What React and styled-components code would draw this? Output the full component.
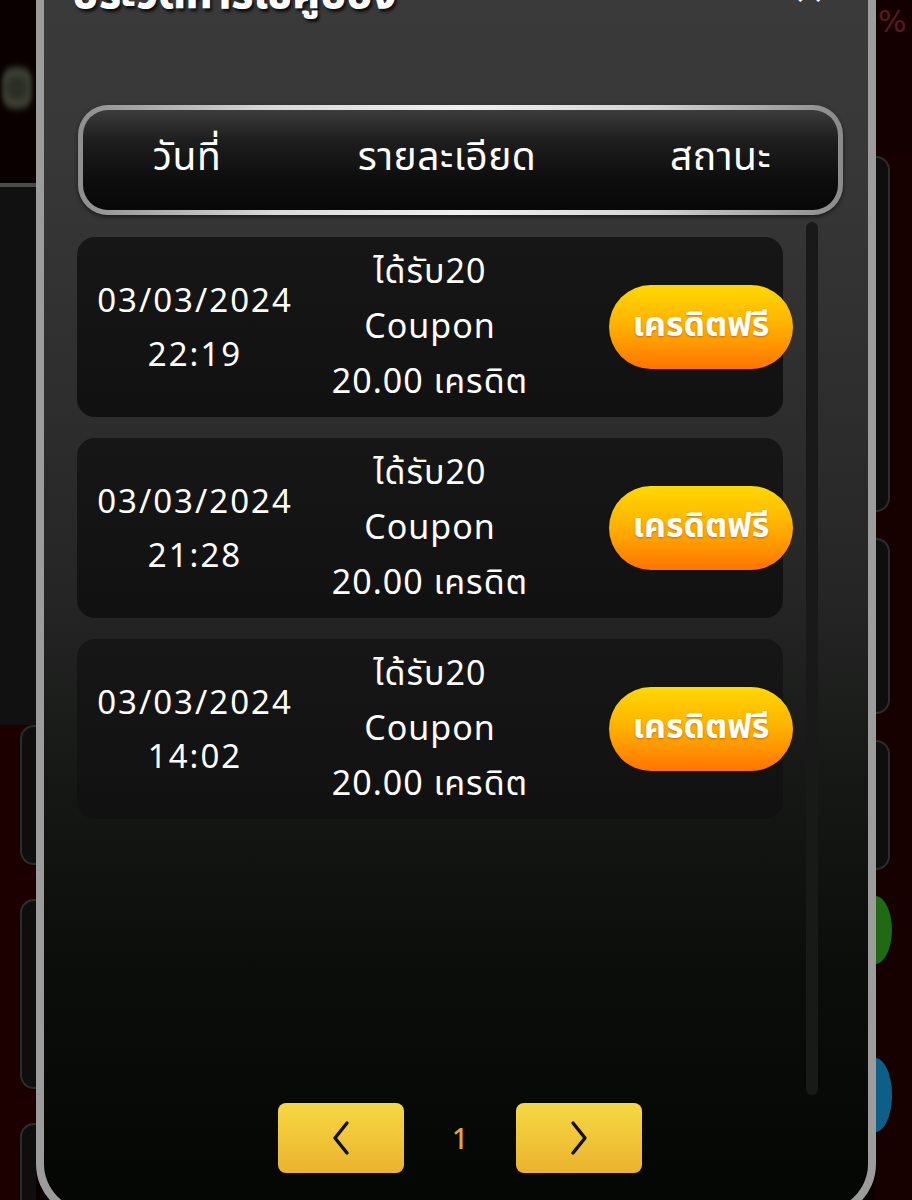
import React from "react";
import styled, { createGlobalStyle } from "styled-components";

const GlobalStyle = createGlobalStyle`
  html, body {
    margin: 0;
    padding: 0;
    background: #000;
  }
  body {
    font-family: "Noto Sans Thai", "Noto Sans", "DejaVu Sans", sans-serif;
    color: #fff;
  }
  * {
    box-sizing: border-box;
  }
`;

const Page = styled.div`
  display: grid;
  grid-template-columns: 36px 840px 36px;
  width: 912px;
  height: 1200px;
  overflow: hidden;
  background: #0b0000;
`;

/* ---------- dimmed page behind the modal ---------- */

const Side = styled.div`
  display: flex;
  flex-direction: column;
  overflow: hidden;
`;

const Block = styled.div`
  flex: ${(p) => (p.grow ? 1 : "none")};
  height: ${(p) => (p.h ? `${p.h}px` : "auto")};
  background: ${(p) => p.bg || "transparent"};
  border-top: ${(p) => (p.line ? "4px solid #4a4a4a" : "none")};
  display: flex;
  flex-direction: column;
  align-items: ${(p) => (p.right ? "flex-start" : "flex-end")};
  padding: ${(p) => p.pad || "0"};
  gap: ${(p) => (p.gap ? `${p.gap}px` : "0")};
`;

const Blob = styled.div`
  width: 30px;
  height: 60px;
  margin: 58px 4px 0 0;
  border-radius: 45%;
  background: radial-gradient(circle at 50% 50%, #2a2e26 20%, #3e4236 50%, rgba(40, 40, 30, 0) 75%);
  filter: blur(2px);
`;

const GhostCard = styled.div`
  width: ${(p) => p.w || 16}px;
  height: ${(p) => p.h}px;
  background: #0e0e0e;
  border: 2px solid #2c2c2c;
  border-radius: ${(p) => (p.right ? "0 14px 14px 0" : "14px 0 0 14px")};
  ${(p) => (p.right ? "border-left: none;" : "border-right: none;")}
`;

const Dot = styled.div`
  width: 34px;
  height: ${(p) => p.h || 68}px;
  margin-left: -18px;
  border-radius: 50%;
  background: ${(p) => p.color};
  display: flex;
  align-items: center;
  justify-content: flex-end;
  padding-right: 6px;
  font: 700 26px "DejaVu Sans", sans-serif;
  color: #111;
`;

const Percent = styled.span`
  font: 400 30px "DejaVu Sans", sans-serif;
  color: #5a1a20;
  margin: 4px 0 0 2px;
`;

/* ---------- modal ---------- */

const Modal = styled.div`
  margin-top: -64px;
  height: 1282px;
  border: 8px solid #9c9c9c;
  border-top: none;
  border-radius: 0 0 54px 54px;
  background: linear-gradient(
    180deg,
    #3b3b3b 0%,
    #383838 16%,
    #2e2e2e 36%,
    #242524 52%,
    #161816 66%,
    #0b0e0b 80%,
    #040604 100%
  );
  display: flex;
  flex-direction: column;
`;

const TitleRow = styled.div`
  height: 84px;
  display: flex;
  align-items: flex-end;
  justify-content: space-between;
  padding: 0 42px 0 28px;
`;

const Title = styled.h1`
  margin: 0;
  font-size: 42px;
  font-weight: 800;
  line-height: 1;
  color: #fff;
  text-shadow: 2px 3px 3px rgba(0, 0, 0, 0.75);
  transform: translateY(-4px);
`;

const Close = styled.span`
  font: 700 40px "DejaVu Sans", sans-serif;
  line-height: 1;
  color: #fff;
  transform: translateY(-9px);
`;

const Body = styled.div`
  flex: 1;
  display: flex;
  flex-direction: column;
  padding: 85px 25px 0 33px;
`;

const HeadBar = styled.div`
  height: 110px;
  margin-left: 1px;
  display: grid;
  grid-template-columns: 208px 312px 1fr;
  align-items: center;
  border: 5px solid transparent;
  border-radius: 30px;
  background:
    linear-gradient(180deg, #3c3c3c 0%, #1e1e1e 30%, #0d0d0d 70%, #080808 100%) padding-box,
    linear-gradient(90deg, #8e8e8e 0%, #d8d8d8 25%, #f0f0f0 50%, #d4d4d4 75%, #8a8a8a 100%) border-box;
  box-shadow: 0 2px 4px rgba(0, 0, 0, 0.5);
`;

const HeadCell = styled.div`
  text-align: center;
  font-size: 39px;
  font-weight: 400;
  letter-spacing: 0.5px;
  color: #fff;
  padding-bottom: 4px;
`;

const ListArea = styled.div`
  margin-top: 7px;
  height: 873px;
  display: flex;
`;

const List = styled.div`
  width: 706px;
  flex: none;
  padding-top: 15px;
  display: flex;
  flex-direction: column;
  gap: 21px;
`;

const Row = styled.div`
  height: 180px;
  border-radius: 18px;
  background: linear-gradient(180deg, #161616 0%, #111111 100%);
  display: flex;
  align-items: center;
  overflow: visible;
`;

const DateCol = styled.div`
  width: 236px;
  flex: none;
  display: flex;
  flex-direction: column;
  align-items: center;
  gap: 16px;
  font-family: "Noto Sans", sans-serif;
  font-size: 33px;
  letter-spacing: 2px;
  line-height: 38px;
`;

const DetailCol = styled.div`
  width: 234px;
  flex: none;
  display: flex;
  flex-direction: column;
  align-items: center;
  font-size: 34px;
  letter-spacing: 1px;
  line-height: 55px;
`;

const StatusButton = styled.div`
  margin-left: 62px;
  width: 184px;
  height: 84px;
  flex: none;
  border-radius: 42px;
  background: linear-gradient(180deg, #ffd800 0%, #ffb400 45%, #ff8c00 80%, #ff7400 100%);
  display: flex;
  align-items: center;
  justify-content: center;
  font-size: 34px;
  font-weight: 700;
  color: #fff;
  text-shadow: 0 1px 2px rgba(120, 50, 0, 0.45);
  padding-bottom: 3px;
`;

const Scrollbar = styled.div`
  margin-left: 23px;
  width: 12px;
  flex: none;
  border-radius: 6px;
  background: #191919;
`;

const Pager = styled.div`
  margin-top: 8px;
  display: flex;
  justify-content: center;
  align-items: center;
`;

const PageButton = styled.div`
  width: 126px;
  height: 70px;
  border-radius: 8px;
  background: linear-gradient(180deg, #f6d843 0%, #f0c437 55%, #ecb22e 100%);
  display: flex;
  align-items: center;
  justify-content: center;
`;

const PageNum = styled.div`
  width: 112px;
  text-align: center;
  font-family: "Noto Sans", sans-serif;
  font-size: 28px;
  font-weight: 500;
  color: #d8a845;
`;

const Chevron = ({ dir }) => (
  <svg width="22" height="36" viewBox="0 0 22 36">
    <path
      d={dir === "left" ? "M17 3 L5 18 L17 33" : "M5 3 L17 18 L5 33"}
      fill="none"
      stroke="#111"
      strokeWidth="3.4"
      strokeLinecap="round"
      strokeLinejoin="round"
    />
  </svg>
);

const records = [
  { date: "03/03/2024", time: "22:19" },
  { date: "03/03/2024", time: "21:28" },
  { date: "03/03/2024", time: "14:02" },
];

export default function App() {
  return (
    <>
      <GlobalStyle />
      <Page>
        <Side>
          <Block h={183} bg="#0a0000">
            <Blob />
          </Block>
          <Block h={542} bg="#111111" line />
          <Block grow bg="#1c0000" gap={34}>
            <GhostCard h={140} />
            <GhostCard h={190} />
            <GhostCard h={120} />
          </Block>
        </Side>

        <Modal>
          <TitleRow>
            <Title>ประวัติการใช้คูปอง</Title>
            <Close>✕</Close>
          </TitleRow>
          <Body>
            <HeadBar>
              <HeadCell>วันที่</HeadCell>
              <HeadCell>รายละเอียด</HeadCell>
              <HeadCell>สถานะ</HeadCell>
            </HeadBar>
            <ListArea>
              <List>
                {records.map((r) => (
                  <Row key={r.time}>
                    <DateCol>
                      <span>{r.date}</span>
                      <span>{r.time}</span>
                    </DateCol>
                    <DetailCol>
                      <span>ได้รับ20</span>
                      <span>Coupon</span>
                      <span>20.00 เครดิต</span>
                    </DetailCol>
                    <StatusButton>เครดิตฟรี</StatusButton>
                  </Row>
                ))}
              </List>
              <Scrollbar />
            </ListArea>
            <Pager>
              <PageButton>
                <Chevron dir="left" />
              </PageButton>
              <PageNum>1</PageNum>
              <PageButton>
                <Chevron dir="right" />
              </PageButton>
            </Pager>
          </Body>
        </Modal>

        <Side>
          <Block h={152} bg="#150000" right>
            <Percent>%</Percent>
          </Block>
          <Block grow bg="#160000" right gap={26} pad="4px 0 0 0">
            <GhostCard right w={14} h={356} />
            <GhostCard right w={14} h={176} />
            <GhostCard right w={14} h={130} />
            <Dot color="#1f6a12" />
            <Block h={42} />
            <Dot color="#0d5f88" h={74} />
            <Block h={20} />
            <Dot color="#c4a510" h={58}>3</Dot>
          </Block>
        </Side>
      </Page>
    </>
  );
}
